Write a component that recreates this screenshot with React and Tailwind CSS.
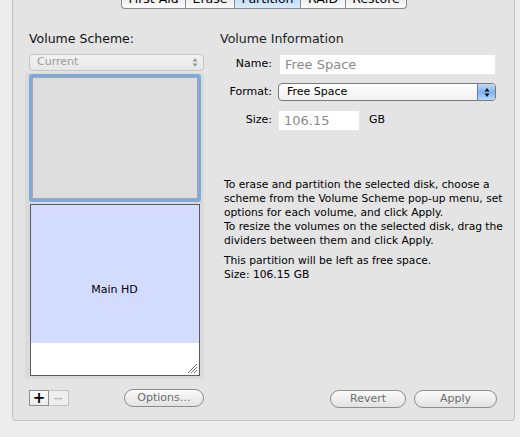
import React from 'react';

const font = { fontFamily: '"DejaVu Sans", "Liberation Sans", sans-serif' };

const tabs = [
  { label: 'First Aid', w: 'w-[64px]' },
  { label: 'Erase', w: 'w-[49px]' },
  { label: 'Partition', w: 'w-[66px]', active: true },
  { label: 'RAID', w: 'w-[45px]' },
  { label: 'Restore', w: 'w-[62px]' },
];

function Pill({ children, className }) {
  return (
    <div className={`h-[18px] rounded-full border border-[#8e8e8e] bg-gradient-to-b from-[#fbfbfb] to-[#e2e2e2] flex items-center justify-center text-[11px] text-[#6d6d6d] ${className}`}>
      {children}
    </div>
  );
}

export default function App() {
  return (
    <div className="w-[520px] h-[437px] overflow-hidden bg-[#ededed] pl-[12px] pr-[5px]" style={font}>
      <div className="h-[421px] bg-[#e4e4e4] border-l border-r border-b border-[#c2c2c2] rounded-b-[4px] flex flex-col">
        {/* Tabs */}
        <div className="h-[9px] flex ml-[108px] -mt-[14px] mb-[14px]">
          {tabs.map((t, i) => (
            <div
              key={t.label}
              className={`${t.w} h-[23px] flex items-end justify-center pb-[1px] leading-[16px] text-[12.5px] text-black border-b border-[#8a8a8a] ${i === 0 ? 'border-l rounded-bl-[4px]' : 'border-l'} ${i === tabs.length - 1 ? 'border-r rounded-br-[4px]' : ''} ${t.active ? 'bg-gradient-to-b from-[#a9cff4] to-[#d7ebfd]' : 'bg-gradient-to-b from-[#dcdcdc] to-[#fafafa]'}`}
            >
              {t.label}
            </div>
          ))}
        </div>

        <div className="flex flex-1 pt-[22px]">
          {/* Left column */}
          <div className="w-[192px] flex flex-col pl-[16px]">
            <div className="text-[12.5px] text-[#111] leading-[16px] h-[18px]">Volume Scheme:</div>
            <div className="mt-[5px] w-[175px] h-[17px] rounded-[4px] border border-[#c4c4c4] bg-gradient-to-b from-[#f3f3f3] to-[#e6e6e6] flex items-center justify-between pl-[7px] pr-[5px]">
              <span className="text-[11px] text-[#9a9a9a]">Current</span>
              <svg width="6" height="11" viewBox="0 0 6 11"><path d="M3 1 L5.5 4.5 H0.5 Z M3 10 L5.5 6.5 H0.5 Z" fill="#9a9a9a" /></svg>
            </div>
            <div className="mt-[2px] -ml-[4px] w-[179px] h-[306px] bg-[#dadada] flex flex-col items-center pt-[1px]">
              <div className="w-[172px] h-[128px] bg-[#dddddd] border-[3px] border-[#7da9df] rounded-[3px] shadow-[inset_0_0_0_1px_#a6a6a6]" />
              <div className="mt-[2px] w-[170px] h-[172px] border border-[#5a5a5a] grid">
                <div className="[grid-area:1/1] flex flex-col">
                  <div className="h-[138px] bg-[#d3dbff]" />
                  <div className="flex-1 bg-white flex items-end justify-end p-[1px]">
                    <svg width="11" height="11" viewBox="0 0 11 11">
                      <path d="M1 10 L10 1 M4 10 L10 4 M7 10 L10 7" stroke="#777" strokeWidth="1" />
                    </svg>
                  </div>
                </div>
                <div className="[grid-area:1/1] flex items-center justify-center text-[11px] text-black">Main HD</div>
              </div>
            </div>
            <div className="mt-[10px] flex items-center justify-between w-[175px]">
              <div className="flex">
                <div className="w-[20px] h-[16px] border border-[#8f8f8f] bg-gradient-to-b from-[#fdfdfd] to-[#ececec] flex items-center justify-center text-[15px] font-bold text-black leading-none">+</div>
                <div className="w-[20px] h-[16px] border border-l-0 border-[#c2c2c2] bg-[#eeeeee] flex items-center justify-center text-[13px] text-[#aaa] leading-none">−</div>
              </div>
              <Pill className="w-[80px]">Options…</Pill>
            </div>
          </div>

          {/* Right column */}
          <div className="flex-1 flex flex-col pl-[15px] pr-[4px]">
            <div className="text-[12.6px] text-[#222] leading-[16px] h-[18px]">Volume Information</div>
            <div className="mt-[5px] flex items-center">
              <span className="w-[52px] text-right text-[11px] text-black">Name:</span>
              <div className="ml-[7px] w-[217px] h-[21px] bg-white border border-[#e6e6e6] flex items-center px-[5px] text-[13px] text-[#8a8a8a]">Free Space</div>
            </div>
            <div className="mt-[8px] flex items-center">
              <span className="w-[52px] text-right text-[11px] text-black">Format:</span>
              <div className="ml-[6px] w-[218px] h-[18px] rounded-[4px] border border-[#7a7a7a] bg-gradient-to-b from-[#ffffff] to-[#f0f0f0] flex items-center justify-between overflow-hidden">
                <span className="pl-[8px] text-[11px] text-black">Free Space</span>
                <div className="w-[18px] h-full bg-gradient-to-b from-[#c3dbf7] via-[#7fb3ef] to-[#b7d8fb] border-l border-[#5f7fb0] flex items-center justify-center">
                  <svg width="6" height="11" viewBox="0 0 6 11"><path d="M3 1 L5.5 4.5 H0.5 Z M3 10 L5.5 6.5 H0.5 Z" fill="#111" /></svg>
                </div>
              </div>
            </div>
            <div className="mt-[9px] flex items-center">
              <span className="w-[52px] text-right text-[11px] text-black">Size:</span>
              <div className="ml-[6px] w-[82px] h-[21px] bg-white border border-[#e6e6e6] flex items-center px-[5px] text-[13px] text-[#8a8a8a]">106.15</div>
              <span className="ml-[9px] text-[11px] text-black">GB</span>
            </div>

            <div className="mt-[47px] pl-[4px] text-[10.7px] leading-[14px] text-black">
              <p>To erase and partition the selected disk, choose a scheme from the Volume Scheme pop-up menu, set options for each volume, and click Apply.</p>
              <p>To resize the volumes on the selected disk, drag the dividers between them and click Apply.</p>
              <p className="mt-[6px]">This partition will be left as free space.</p>
              <p>Size: 106.15 GB</p>
            </div>

            <div className="mt-auto mb-[12px] flex justify-end gap-[8px] pr-[13px]">
              <Pill className="w-[76px]">Revert</Pill>
              <Pill className="w-[83px]">Apply</Pill>
            </div>
          </div>
        </div>
      </div>
    </div>
  );
}
